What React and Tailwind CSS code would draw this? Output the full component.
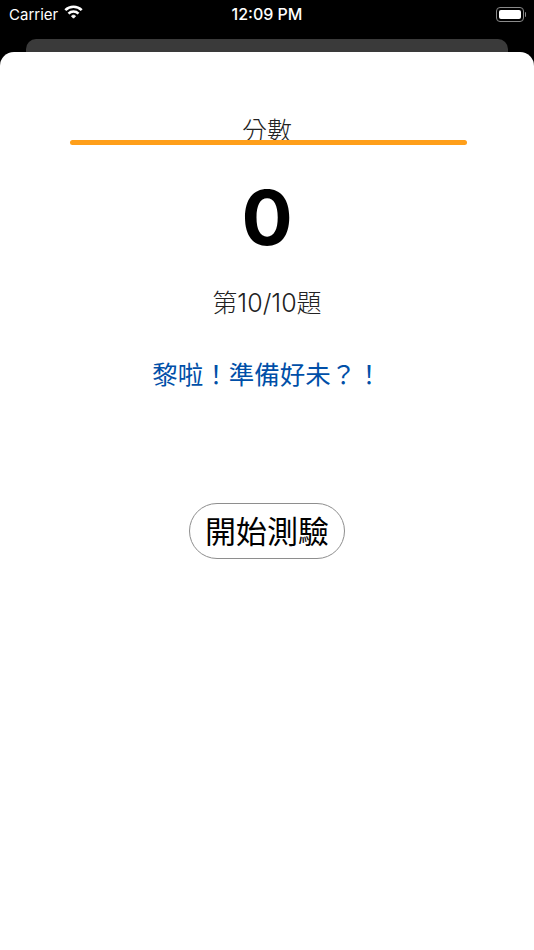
import { useState } from "react";

const cjk = "font-['Inter','Noto_Sans_CJK_TC',sans-serif]";

const StatusBar = () => (
  <div className="relative h-[28px] flex items-center justify-between pl-[9px] pr-[8px] text-white font-['Inter',sans-serif]">
    <div className="flex items-center gap-[6px]">
      <span className="text-[15px] font-normal leading-none">Carrier</span>
      <svg width="19" height="15" viewBox="0 0 19 15" fill="none" stroke="white" strokeWidth="2.600" className="-mt-[3px]">
        <path d="M1.300 5.200C3.500 3 6.300 1.800 9.500 1.800s6 1.200 8.200 3.400" />
        <path d="M4.500 8.600c1.300-1.300 3-2.100 5-2.100s3.700.8 5 2.100" />
        <path d="M9.500 10.200c-.8 0-1.500.3-2 .8l2 2.200 2-2.200c-.5-.5-1.200-.8-2-.8z" fill="white" stroke="white" strokeWidth="1" />
      </svg>
    </div>
    <span className="absolute left-0 right-0 text-center text-[16px] font-medium leading-none">12:09 PM</span>
    <div className="flex items-center gap-[1px]">
      <div className="w-[28px] h-[15px] rounded-[4px] border border-[#8a8a8a] p-[2px]">
        <div className="w-full h-full rounded-[2px] bg-white" />
      </div>
      <div className="w-[1px] h-[5px] rounded-r bg-[#8a8a8a]" />
    </div>
  </div>
);

export default function App() {
  const [score] = useState(0);

  return (
    <div className={`min-h-[950px] flex flex-col bg-black ${cjk}`}>
      <StatusBar />
      <div className="h-[11px]" />
      <div className="mx-[26px] h-[13px] rounded-t-[10px] bg-[#3a3a3a]" />
      <div className="flex-1 flex flex-col items-center rounded-t-[14px] bg-white">
        {/* bar sits on top of the score heading */}
        <p className="mt-[65px] text-[25px] leading-[28px] font-light text-[#222]">分數</p>
        <div className="relative -mt-[5px] ml-[2px] w-[397px] h-[5px] rounded-full bg-[#ff9f1a]" />
        <p className="mt-[26px] text-[76px] leading-[92px] font-bold text-black font-['Inter',sans-serif]">{score}</p>
        <p className="mt-[24px] text-[25px] leading-[32px] font-light text-[#222]">第10/10題</p>
        <p className="mt-[39px] text-[25.500px] leading-[34px] font-normal text-[#004fa8]">黎啦！準備好未？！</p>
        <button className="mt-[111px] w-[156px] h-[56px] rounded-[28px] border border-[#8e8e8e] text-[31px] leading-none font-normal text-black">
          開始測驗
        </button>
      </div>
    </div>
  );
}
